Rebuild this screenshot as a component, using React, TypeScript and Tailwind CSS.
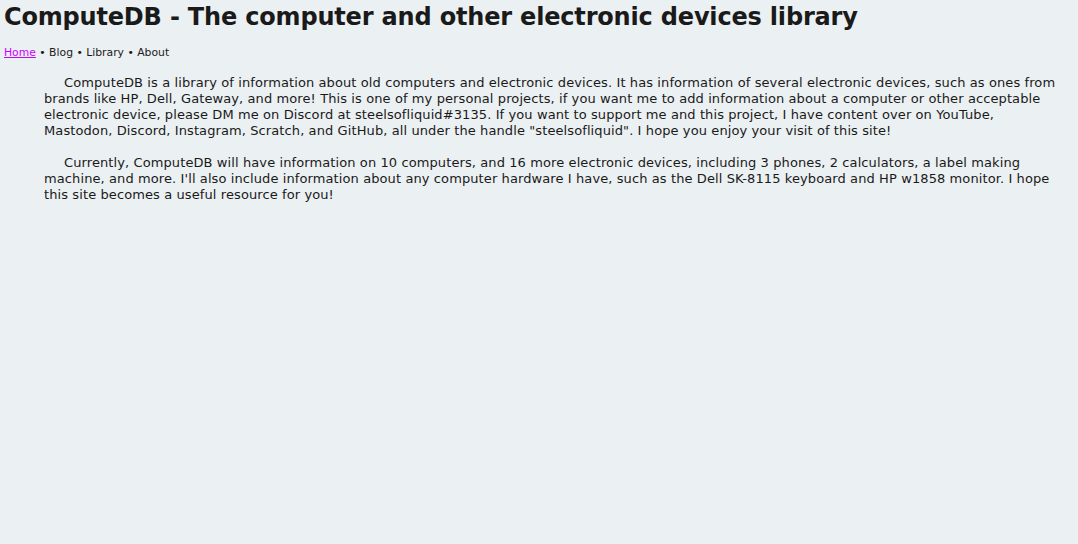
const para1 = [
  "ComputeDB is a library of information about old computers and electronic devices. It has information of several electronic devices, such as ones from",
  "brands like HP, Dell, Gateway, and more! This is one of my personal projects, if you want me to add information about a computer or other acceptable",
  "electronic device, please DM me on Discord at steelsofliquid#3135. If you want to support me and this project, I have content over on YouTube,",
  'Mastodon, Discord, Instagram, Scratch, and GitHub, all under the handle "steelsofliquid". I hope you enjoy your visit of this site!',
]

const para2 = [
  "Currently, ComputeDB will have information on 10 computers, and 16 more electronic devices, including 3 phones, 2 calculators, a label making",
  "machine, and more. I'll also include information about any computer hardware I have, such as the Dell SK-8115 keyboard and HP w1858 monitor. I hope",
  "this site becomes a useful resource for you!",
]

const Paragraph = ({ lines }: { lines: string[] }) => (
  <div className="pl-[40px] text-[13px] leading-[16px] tracking-[0.1px]">
    {lines.map((line, index) => (
      <div key={`${index}-line`} className={index === 0 ? "pl-[20px] whitespace-nowrap" : "whitespace-nowrap"}>
        {line}
      </div>
    ))}
  </div>
)

export default function App() {
  return (
    <div
      className="min-h-[544px] bg-[#ebf0f2] text-[#1a1a1a] px-[4px]"
      style={{ fontFamily: '"DejaVu Sans", Verdana, sans-serif' }}
    >
      <h1 className="text-[24px] font-bold leading-[32px] pt-[1px] tracking-[-0.18px]">
        ComputeDB - The computer and other electronic devices library
      </h1>
      <nav className="mt-[14px] text-[10.8px] leading-[12px]">
        <a href="#" className="text-[#cc00ff] underline">Home</a>
        <span> • Blog • Library • About</span>
      </nav>
      <div className="mt-[16px] flex flex-col gap-[16px]">
        <Paragraph lines={para1} />
        <Paragraph lines={para2} />
      </div>
    </div>
  )
}
